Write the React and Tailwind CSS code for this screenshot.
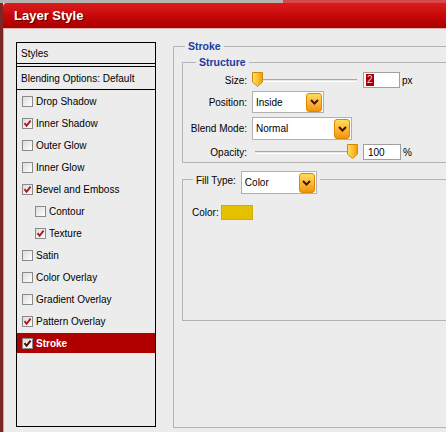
import React from 'react';

const Box = ({ checked, selected }) => (
  <span className="w-[11px] h-[11px] border border-[#8a8a8a] bg-gradient-to-br from-[#dcdcdc] to-white flex items-center justify-center shrink-0">
    {checked && (
      <svg width="9" height="9" viewBox="0 0 9 9">
        <path d="M1.5 4.2 L3.6 6.8 L7.6 1.6" stroke={selected ? '#5a0000' : '#b01818'} strokeWidth="1.9" fill="none" />
      </svg>
    )}
  </span>
);

const Arrow = ({ className }) => (
  <span className={`ml-auto rounded-[3px] border border-[#d98a00] bg-gradient-to-b from-[#ffdc5a] to-[#f39400] flex items-center justify-center ${className}`}>
    <svg width="9" height="6" viewBox="0 0 9 6">
      <path d="M1 1 L4.5 4.5 L8 1" stroke="#4a1200" strokeWidth="2" fill="none" />
    </svg>
  </span>
);

const Thumb = () => (
  <svg width="11" height="15" viewBox="0 0 11 15">
    <defs>
      <linearGradient id="tg" x1="0" y1="0" x2="1" y2="0">
        <stop offset="0" stopColor="#ffe06a" />
        <stop offset="1" stopColor="#f0a000" />
      </linearGradient>
    </defs>
    <path d="M0.5 0.5 H10.5 V10 L5.5 14.5 L0.5 10 Z" fill="url(#tg)" stroke="#d08a00" />
  </svg>
);

const Track = ({ thumbLeft }) => (
  <div className="relative w-[108px] h-[16px] flex items-center">
    <div className="mx-[3px] flex-1 h-[3px] border-t border-[#a8a8a8] border-b border-b-white bg-[#e6e6e6]" />
    <div className={`absolute top-0 ${thumbLeft}`}>
      <Thumb />
    </div>
  </div>
);

const items = [
  { label: 'Drop Shadow' },
  { label: 'Inner Shadow', checked: true },
  { label: 'Outer Glow' },
  { label: 'Inner Glow' },
  { label: 'Bevel and Emboss', checked: true },
  { label: 'Contour', indent: true },
  { label: 'Texture', indent: true, checked: true },
  { label: 'Satin' },
  { label: 'Color Overlay' },
  { label: 'Gradient Overlay' },
  { label: 'Pattern Overlay', checked: true },
  { label: 'Stroke', checked: true, selected: true },
];

export default function App() {
  return (
    <div className="w-[446px] h-[432px] overflow-hidden bg-[#ececec] flex flex-col font-['Liberation_Sans',Arial,sans-serif] text-[10px] text-black leading-[13px]">
      {/* top edge */}
      <div className="h-[3px] flex shrink-0">
        <div className="w-[283px] bg-[#b8b4b0]" />
        <div className="flex-1 bg-[#d84848]" />
      </div>
      <div className="flex-1 flex flex-col border-l-[3px] border-[#7e2626]">
        {/* title bar */}
        <div className="h-[26px] shrink-0 flex items-center pl-[11px] rounded-tl-[4px] bg-gradient-to-b from-[#dc1c1c] via-[#c80808] to-[#a80000] border-b border-[#e6b0b0]">
          <span className="text-white font-bold text-[13px] [text-shadow:1px_1px_0_#6a0000]">Layer Style</span>
        </div>

        {/* body */}
        <div className="flex-1 flex items-start overflow-hidden border-l border-[#e0a0a0]">
          {/* styles list */}
          <div className="ml-[12px] mt-[13px] w-[140px] h-[385px] shrink-0 border border-black bg-[#ececec] flex flex-col">
            <div className="h-[21px] shrink-0 flex items-center pl-[4px] border-b border-black">Styles</div>
            <div className="h-[2px] shrink-0" />
            <div className="h-[24px] shrink-0 flex items-center pl-[4px] border-t border-b border-black">Blending Options: Default</div>
            {items.map((it) => (
              <div key={it.label} className={`h-[22px] shrink-0 flex items-center ${it.selected ? 'py-px' : ''}`}>
                <div
                  className={`h-full w-full flex items-center gap-[3px] ${it.indent ? 'pl-[18px]' : 'pl-[5px]'} ${
                    it.selected ? 'bg-[#b00000] text-white font-bold' : ''
                  }`}
                >
                  <Box checked={it.checked} selected={it.selected} />
                  <span>{it.label}</span>
                </div>
              </div>
            ))}
          </div>

          {/* stroke panel */}
          <fieldset className="ml-[17px] mt-[11px] w-[300px] h-[388px] shrink-0 border border-[#b4b4b4]">
            <legend className="ml-[11px] px-[3px] font-bold text-[10.5px] text-[#1c3c9c]">Stroke</legend>

            <fieldset className="ml-[8px] mt-[3px] w-[300px] pb-[2px] border border-[#b4b4b4]">
              <legend className="ml-[13px] px-[3px] font-bold text-[10.5px] text-[#1c3c9c]">Structure</legend>

              <div className="mt-[3px] h-[16px] flex items-center">
                <span className="w-[64px] text-right">Size:</span>
                <div className="ml-[5px]">
                  <Track thumbLeft="left-0" />
                </div>
                <div className="ml-[3px] w-[37px] h-[16px] bg-white border border-[#a0a0a0] flex items-center pl-[2px]">
                  <span className="bg-[#a80000] text-[#f4d0d0] px-px leading-[12px]">2</span>
                </div>
                <span className="ml-[2px]">px</span>
              </div>

              <div className="mt-[3px] h-[22px] flex items-center">
                <span className="w-[64px] text-right">Position:</span>
                <div className="ml-[5px] w-[72px] h-[22px] bg-white border border-[#b0b0b0] flex items-center pl-[3px] pr-px">
                  <span>Inside</span>
                  <Arrow className="w-[16px] h-[19px]" />
                </div>
              </div>

              <div className="mt-[4px] h-[23px] flex items-center">
                <span className="w-[64px] text-right">Blend Mode:</span>
                <div className="ml-[5px] w-[100px] h-[23px] bg-white border border-[#b0b0b0] flex items-center pl-[3px] pr-px">
                  <span>Normal</span>
                  <Arrow className="w-[16px] h-[20px]" />
                </div>
              </div>

              <div className="mt-[4px] h-[16px] flex items-center">
                <span className="w-[64px] text-right">Opacity:</span>
                <div className="ml-[5px]">
                  <Track thumbLeft="left-[95px]" />
                </div>
                <div className="ml-[3px] w-[38px] h-[16px] bg-white border border-[#a0a0a0] flex items-center pl-[4px]">
                  100
                </div>
                <span className="ml-[2px]">%</span>
              </div>
            </fieldset>

            <fieldset className="ml-[8px] mt-[8px] w-[300px] h-[150px] border border-[#b4b4b4]">
              <legend className="ml-[10px] px-[3px] h-[16px]">
                <div className="flex items-start">
                  <span className="mt-[3px]">Fill Type:</span>
                  <div className="ml-[5px] w-[76px] h-[23px] shrink-0 bg-white border border-[#b0b0b0] flex items-center pl-[3px] pr-px">
                    <span>Color</span>
                    <Arrow className="w-[16px] h-[20px]" />
                  </div>
                </div>
              </legend>
              <div className="mt-[18px] h-[15px] flex items-center pl-[9px]">
                <span>Color:</span>
                <div className="ml-[2px] w-[32px] h-[15px] bg-[#e5c000] border border-[#cfae00]" />
              </div>
            </fieldset>
          </fieldset>
        </div>
      </div>
    </div>
  );
}
